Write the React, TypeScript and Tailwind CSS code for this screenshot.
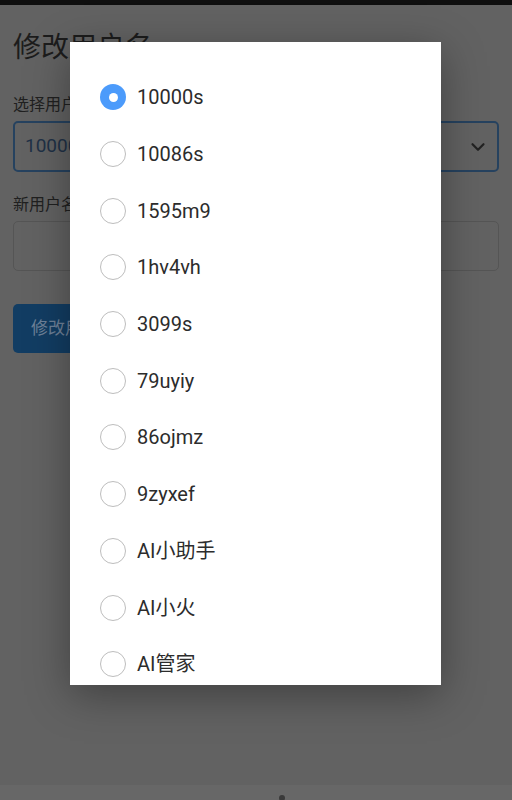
import { useState } from "react";

const USERS = [
  "10000s",
  "10086s",
  "1595m9",
  "1hv4vh",
  "3099s",
  "79uyiy",
  "86ojmz",
  "9zyxef",
  "AI小助手",
  "AI小火",
  "AI管家",
];

const FONT = {
  fontFamily: 'Roboto, "Noto Sans CJK SC", sans-serif',
};

export default function App() {
  const [selected, setSelected] = useState("10000s");

  return (
    <div className="relative w-[512px] h-[800px] overflow-hidden bg-[#626262]" style={FONT}>
      {/* 状态栏 */}
      <div className="h-[5px] bg-[#0f0f0f]" />

      {/* 页面 (被遮罩) */}
      <div className="px-[13px] pt-[20px]">
        <h1 className="text-[28px] leading-[46px] text-[#1c1c1c]">修改用户名</h1>
        <p className="mt-[23px] text-[16px] leading-[22px] text-[#202020]">选择用户</p>
        <div className="mt-[5px] h-[51px] rounded-[5px] border-2 border-[#26425f] flex items-center justify-between pl-[10px] pr-[8px]">
          <span className="text-[19px] text-[#1f3146]">{selected}</span>
          <svg width="22" height="22" viewBox="0 0 24 24" fill="none" stroke="#222" strokeWidth="2.4" strokeLinecap="round" strokeLinejoin="round">
            <path d="M6 9l6 6 6-6" />
          </svg>
        </div>
        <p className="mt-[22px] text-[16px] leading-[22px] text-[#202020]">新用户名</p>
        <div className="mt-[5px] h-[50px] rounded-[5px] border border-[#555555]" />
        <button className="mt-[33px] h-[49px] w-[160px] rounded-[5px] bg-[#123d63] text-left pl-[18px] text-[17px] text-[#6e8198]">
          修改用户名
        </button>
      </div>

      {/* 底部导航条 */}
      <div className="absolute left-0 right-0 bottom-0 h-[15px] bg-[#676767] flex justify-center">
        <div className="mt-[10px] ml-[52px] w-[6px] h-[6px] rounded-full bg-[#3a3a3a]" />
      </div>

      {/* 选择对话框 */}
      <div className="absolute left-[70px] top-[42px] w-[371px] h-[643px] bg-white shadow-[0_10px_40px_rgba(0,0,0,0.35)] overflow-hidden">
        <div className="pt-[27px]">
          {USERS.map((u) => {
            const checked = u === selected;
            return (
              <button
                key={u}
                onClick={() => setSelected(u)}
                className="w-full h-[56.7px] flex items-center pl-[30px] text-left"
              >
                {checked ? (
                  <span className="w-[26px] h-[26px] rounded-full bg-[#4c9bfb] flex items-center justify-center">
                    <span className="w-[9px] h-[9px] rounded-full bg-white" />
                  </span>
                ) : (
                  <span className="w-[26px] h-[26px] rounded-full border-[1.5px] border-[#bdbdbd]" />
                )}
                <span className="ml-[11px] text-[20px] text-[#2c2c2c]">{u}</span>
              </button>
            );
          })}
        </div>
      </div>
    </div>
  );
}
